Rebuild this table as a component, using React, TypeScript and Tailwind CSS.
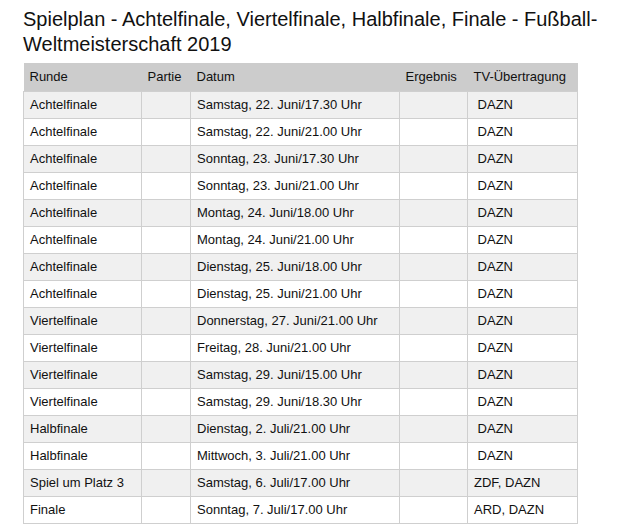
const spiele = [
  ["Achtelfinale", "Samstag, 22. Juni/17.30 Uhr", "\u00a0DAZN"],
  ["Achtelfinale", "Samstag, 22. Juni/21.00 Uhr", "\u00a0DAZN"],
  ["Achtelfinale", "Sonntag, 23. Juni/17.30 Uhr", "\u00a0DAZN"],
  ["Achtelfinale", "Sonntag, 23. Juni/21.00 Uhr", "\u00a0DAZN"],
  ["Achtelfinale", "Montag, 24. Juni/18.00 Uhr", "\u00a0DAZN"],
  ["Achtelfinale", "Montag, 24. Juni/21.00 Uhr", "\u00a0DAZN"],
  ["Achtelfinale", "Dienstag, 25. Juni/18.00 Uhr", "\u00a0DAZN"],
  ["Achtelfinale", "Dienstag, 25. Juni/21.00 Uhr", "\u00a0DAZN"],
  ["Viertelfinale", "Donnerstag, 27. Juni/21.00 Uhr", "\u00a0DAZN"],
  ["Viertelfinale", "Freitag, 28. Juni/21.00 Uhr", "\u00a0DAZN"],
  ["Viertelfinale", "Samstag, 29. Juni/15.00 Uhr", "\u00a0DAZN"],
  ["Viertelfinale", "Samstag, 29. Juni/18.30 Uhr", "\u00a0DAZN"],
  ["Halbfinale", "Dienstag, 2. Juli/21.00 Uhr", "\u00a0DAZN"],
  ["Halbfinale", "Mittwoch, 3. Juli/21.00 Uhr", "\u00a0DAZN"],
  ["Spiel um Platz 3", "Samstag, 6. Juli/17.00 Uhr", "ZDF, DAZN"],
  ["Finale", "Sonntag, 7. Juli/17.00 Uhr", "ARD, DAZN"],
];

export default function App() {
  return (
    <div className="min-h-screen bg-white font-['Liberation_Sans',Arial,sans-serif] text-[#111]">
      <div className="w-[600px] pl-[23px] pt-[7px]">
        <h1 className="text-[20px] leading-[25px] font-normal">
          Spielplan - Achtelfinale, Viertelfinale, Halbfinale, Finale - Fußball-Weltmeisterschaft 2019
        </h1>

        <table className="mt-[6px] w-[554px] table-fixed border-collapse text-[13px] text-[#111]">
          <colgroup>
            <col className="w-[118px]" />
            <col className="w-[49px]" />
            <col className="w-[209px]" />
            <col className="w-[68px]" />
            <col className="w-[110px]" />
          </colgroup>
          <thead>
            <tr className="h-[28px] bg-[#cccccc]">
              <th className="px-[6px] text-left font-normal">Runde</th>
              <th className="px-[6px] text-left font-normal">Partie</th>
              <th className="px-[6px] text-left font-normal">Datum</th>
              <th className="px-[6px] text-left font-normal">Ergebnis</th>
              <th className="px-[6px] text-left font-normal">TV-Übertragung</th>
            </tr>
          </thead>
          <tbody>
            {spiele.map((s, i) => (
              <tr
                key={i}
                className={i % 2 === 0 ? "h-[27px] bg-[#f0f0f0]" : "h-[27px] bg-white"}
              >
                <td className="border border-[#cfcfcf] px-[6px]">{s[0]}</td>
                <td className="border border-[#cfcfcf] px-[6px]"></td>
                <td className="border border-[#cfcfcf] px-[6px]">{s[1]}</td>
                <td className="border border-[#cfcfcf] px-[6px]"></td>
                <td className="border border-[#cfcfcf] px-[6px]">{s[2]}</td>
              </tr>
            ))}
          </tbody>
        </table>
      </div>
    </div>
  );
}
